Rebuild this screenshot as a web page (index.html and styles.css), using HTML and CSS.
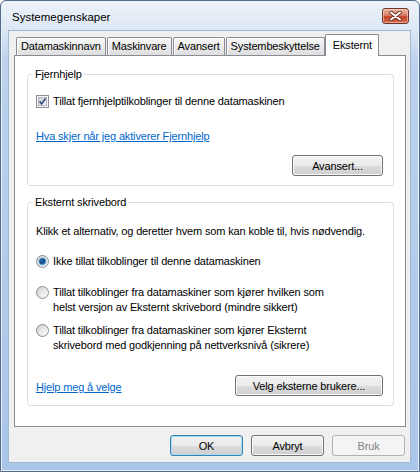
FILE: index.html
```html
<!DOCTYPE html>
<html lang="no">
<head>
<meta charset="utf-8">
<title>Systemegenskaper</title>
<link rel="stylesheet" href="styles.css">
</head>
<body>
<div class="window">
  <div class="titlebar">
    <span class="title">Systemegenskaper</span>
    <div class="close">
      <svg width="13" height="10" viewBox="0 0 13 10">
        <path d="M2 1.5 L11 8.5 M11 1.5 L2 8.5" stroke="#6a2a1c" stroke-width="3.6" stroke-linecap="round"/>
        <path d="M2 1.5 L11 8.5 M11 1.5 L2 8.5" stroke="#ffffff" stroke-width="2" stroke-linecap="round"/>
      </svg>
    </div>
  </div>
  <div class="client">
    <div class="tabs">
      <div class="tab">Datamaskinnavn</div>
      <div class="tab">Maskinvare</div>
      <div class="tab">Avansert</div>
      <div class="tab">Systembeskyttelse</div>
      <div class="tab active">Eksternt</div>
    </div>
    <div class="panel">
      <fieldset class="group g1">
        <legend>Fjernhjelp</legend>
        <div class="opt check-row">
          <svg class="box" width="13" height="13" viewBox="0 0 13 13">
            <defs>
              <linearGradient id="cbg" x1="0" y1="0" x2="1" y2="1">
                <stop offset="0" stop-color="#cbd0d8"/>
                <stop offset="1" stop-color="#f7f8fa"/>
              </linearGradient>
            </defs>
            <rect x="0.5" y="0.5" width="12" height="12" fill="#f5f5f5" stroke="#8e8f8f"/>
            <rect x="2.5" y="2.5" width="8" height="8" fill="url(#cbg)" stroke="#b4b9c2"/>
            <path d="M3.6 6.4 L5.6 8.8 L9.6 3.4" stroke="#3f5483" stroke-width="1.7" fill="none"/>
          </svg>
          <span class="lbl">Tillat fjernhjelptilkoblinger til denne datamaskinen</span>
        </div>
        <a class="link l1" href="#">Hva skjer når jeg aktiverer Fjernhjelp</a>
        <div class="row-end">
          <button class="btn w-adv" type="button">Avansert...</button>
        </div>
      </fieldset>

      <fieldset class="group g2">
        <legend>Eksternt skrivebord</legend>
        <p class="intro">Klikk et alternativ, og deretter hvem som kan koble til, hvis nødvendig.</p>
        <div class="opt radio-row r1">
          <svg class="radio" width="13" height="13" viewBox="0 0 13 13">
            <defs>
              <linearGradient id="rg1" x1="0" y1="0" x2="1" y2="1">
                <stop offset="0" stop-color="#cfd1d4"/>
                <stop offset="1" stop-color="#ffffff"/>
              </linearGradient>
              <radialGradient id="dot1" cx="0.4" cy="0.35" r="0.7">
                <stop offset="0" stop-color="#2f6fb2"/>
                <stop offset="0.55" stop-color="#14477f"/>
                <stop offset="1" stop-color="#7fc3ee"/>
              </radialGradient>
            </defs>
            <circle cx="6.5" cy="6.5" r="6" fill="url(#rg1)" stroke="#8b8d90"/>
            <circle cx="6.5" cy="6.5" r="3.6" fill="url(#dot1)" stroke="#5aa7e0" stroke-width="0.8"/>
          </svg>
          <span class="lbl">Ikke tillat tilkoblinger til denne datamaskinen</span>
        </div>
        <div class="opt radio-row r2">
          <svg class="radio" width="13" height="13" viewBox="0 0 13 13">
            <defs>
              <linearGradient id="rg2" x1="0" y1="0" x2="1" y2="1">
                <stop offset="0" stop-color="#c9cbce"/>
                <stop offset="1" stop-color="#ffffff"/>
              </linearGradient>
              <linearGradient id="ri2" x1="0" y1="0" x2="1" y2="1">
                <stop offset="0" stop-color="#d9dadc"/>
                <stop offset="1" stop-color="#f7f7f7"/>
              </linearGradient>
            </defs>
            <circle cx="6.5" cy="6.5" r="6" fill="url(#rg2)" stroke="#8b8d90"/>
            <circle cx="6.5" cy="6.5" r="3.8" fill="url(#ri2)"/>
          </svg>
          <span class="lbl">Tillat tilkoblinger fra datamaskiner som kjører hvilken som<br>helst versjon av Eksternt skrivebord (mindre sikkert)</span>
        </div>
        <div class="opt radio-row r3">
          <svg class="radio" width="13" height="13" viewBox="0 0 13 13">
            <defs>
              <linearGradient id="rg3" x1="0" y1="0" x2="1" y2="1">
                <stop offset="0" stop-color="#c9cbce"/>
                <stop offset="1" stop-color="#ffffff"/>
              </linearGradient>
              <linearGradient id="ri3" x1="0" y1="0" x2="1" y2="1">
                <stop offset="0" stop-color="#d9dadc"/>
                <stop offset="1" stop-color="#f7f7f7"/>
              </linearGradient>
            </defs>
            <circle cx="6.5" cy="6.5" r="6" fill="url(#rg3)" stroke="#8b8d90"/>
            <circle cx="6.5" cy="6.5" r="3.8" fill="url(#ri3)"/>
          </svg>
          <span class="lbl">Tillat tilkoblinger fra datamaskiner som kjører Eksternt<br>skrivebord med godkjenning på nettverksnivå (sikrere)</span>
        </div>
        <div class="row-split">
          <a class="link l2" href="#">Hjelp meg å velge</a>
          <button class="btn w-users" type="button">Velg eksterne brukere...</button>
        </div>
      </fieldset>
    </div>
    <div class="actions">
      <button class="btn w-dlg default" type="button">OK</button>
      <button class="btn w-dlg" type="button">Avbryt</button>
      <button class="btn w-dlg disabled" type="button">Bruk</button>
    </div>
  </div>
</div>
</body>
</html>
```

FILE: styles.css
```css
html, body {
  margin: 0;
  padding: 0;
  width: 420px;
  height: 472px;
  overflow: hidden;
  background: #ffffff;
}

body {
  font-family: "Liberation Sans", Arial, sans-serif;
  font-size: 11px;
  line-height: 13px;
  letter-spacing: -0.15px;
  color: #000000;
}

.window {
  box-sizing: border-box;
  width: 420px;
  height: 472px;
  border: 1px solid #52698a;
  border-radius: 6px 6px 0 0;
  display: flex;
  flex-direction: column;
  background: linear-gradient(to bottom, #eef3f9 0px, #dde7f4 28px, #bcd2ee 60px, #a9c5ea 100%);
  box-shadow: inset 0 0 0 1px #e9f1fb;
}

.titlebar {
  height: 29px;
  flex: none;
  box-sizing: border-box;
  padding: 3px 10px 0 11px;
  display: flex;
  align-items: center;
  justify-content: space-between;
}

.title {
  font-size: 11.5px;
  letter-spacing: 0;
  color: #000000;
}

.close {
  width: 27px;
  height: 16px;
  box-sizing: border-box;
  border: 1px solid #6e3426;
  border-radius: 3px;
  background: linear-gradient(to bottom, #eab3a3 0%, #d9826b 45%, #c6452b 55%, #d06a4e 100%);
  box-shadow: inset 0 0 0 1px rgba(255, 220, 205, 0.55);
  display: flex;
  align-items: center;
  justify-content: center;
  margin-top: -3px;
}

.client {
  flex: 1;
  margin: 0 8px 8px 7px;
  border: 1px solid #a5b8d2;
  background: #f0f0f0;
  display: flex;
  flex-direction: column;
  padding: 3px 4px 6px 5px;
}

.tabs {
  display: flex;
  align-items: flex-end;
  margin: 0 0 -1px 2px;
  gap: 1px;
}

.tab {
  box-sizing: border-box;
  height: 18px;
  margin-bottom: 1px;
  padding: 0 4px;
  line-height: 17px;
  border: 1px solid #898c95;
  border-bottom: none;
  border-radius: 2px 2px 0 0;
  background: linear-gradient(to bottom, #f7f7f7 0%, #ebebeb 50%, #dedede 100%);
  box-shadow: inset 1px 1px 0 #ffffff;
  white-space: nowrap;
}

.tab.active {
  height: 22px;
  margin-bottom: 0;
  margin-left: -1px;
  padding: 0 6px 0 7px;
  line-height: 20px;
  background: #ffffff;
  box-shadow: none;
  z-index: 1;
}

.panel {
  flex: 1;
  border: 1px solid #898c95;
  background: #ffffff;
  padding: 0 11px 0 12px;
  display: flex;
  flex-direction: column;
}

.group {
  margin: 0;
  border: 1px solid #d5dfe5;
  border-radius: 3px;
  padding: 0 10px 9px 8px;
  min-width: 0;
}

.group legend {
  margin-left: -3px;
  padding: 0 2px;
  line-height: 13px;
}

.g1 {
  margin-top: 12px;
}

.g2 {
  margin-top: 10px;
}

.opt {
  display: flex;
  align-items: flex-start;
}

.opt svg {
  flex: none;
  display: block;
  margin-right: 4px;
}

.check-row {
  margin-top: 14px;
}

.link {
  display: block;
  color: #0066cc;
  text-decoration: underline;
  align-self: flex-start;
}

.l1 {
  margin-top: 22px;
}

.l2 {
  align-self: center;
  padding-top: 3px;
}

.row-end {
  display: flex;
  justify-content: flex-end;
  margin-top: 12px;
}

.intro {
  margin: 16px 0 0 0;
}

.radio-row .lbl {
  line-height: 15px;
}

.radio-row svg {
  margin-top: 1px;
}

.r1 {
  margin-top: 16px;
}

.r2 {
  margin-top: 16px;
}

.r3 {
  margin-top: 8px;
}

.row-split {
  display: flex;
  justify-content: space-between;
  align-items: center;
  margin-top: 22px;
}

.btn {
  box-sizing: border-box;
  height: 21px;
  padding: 0;
  font-family: "Liberation Sans", Arial, sans-serif;
  font-size: 11px;
  letter-spacing: -0.15px;
  color: #000000;
  border: 1px solid #707070;
  border-radius: 3px;
  background: linear-gradient(to bottom, #f2f2f2 0%, #ebebeb 50%, #dddddd 50%, #cfcfcf 100%);
  box-shadow: inset 0 0 0 1px #fbfbfb;
}

.btn.default {
  border-color: #3c7fb1;
  box-shadow: inset 0 0 0 1px #9edcf7;
}

.btn.disabled {
  border-color: #adb2b5;
  background: #f4f4f4;
  color: #838383;
  box-shadow: none;
}

.w-adv {
  width: 91px;
}

.w-users {
  width: 148px;
}

.w-dlg {
  width: 73px;
}

.actions {
  display: flex;
  justify-content: flex-end;
  gap: 8px;
  margin-top: 8px;
  padding-right: 1px;
}
```
